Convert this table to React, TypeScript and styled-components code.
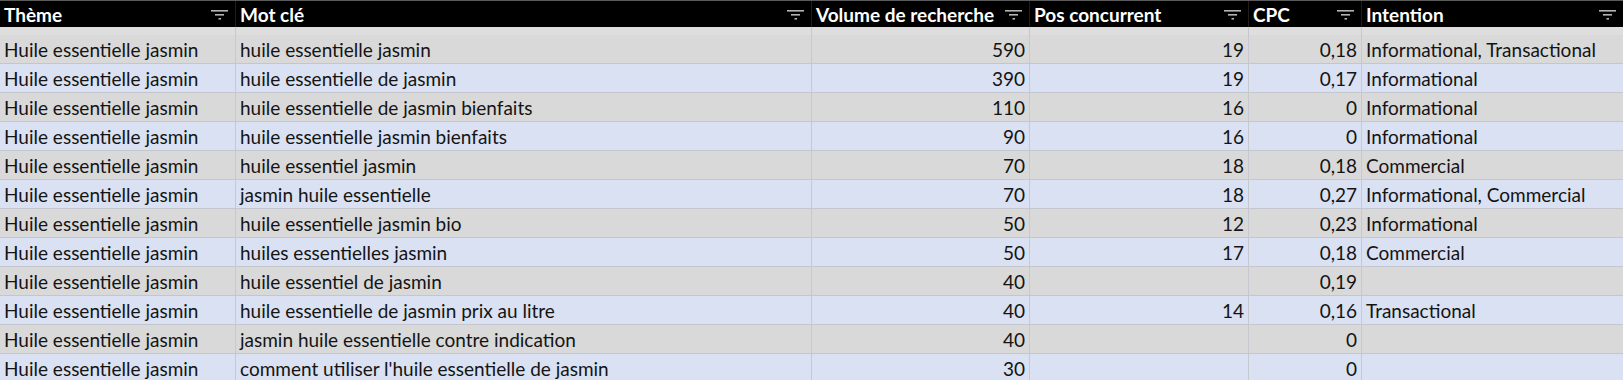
import React from 'react';
import styled, { createGlobalStyle } from 'styled-components';

const GlobalStyle = createGlobalStyle`
  html, body {
    margin: 0;
    padding: 0;
    background: #ffffff;
  }
  * {
    box-sizing: border-box;
  }
`;

const COLUMNS = '236px 576px 218px 219px 113px 261px';

const Sheet = styled.div`
  width: 1623px;
  height: 380px;
  overflow: hidden;
  font-family: Lato, "Liberation Sans", sans-serif;
  font-size: 19px;
  color: #141414;
`;

const HeaderRow = styled.div`
  display: grid;
  grid-template-columns: ${COLUMNS};
  height: 27px;
  background: #000000;
  border-top: 1px solid #5a5a5a;
`;

const HeaderCell = styled.div`
  display: flex;
  align-items: center;
  justify-content: space-between;
  padding: 1px 6px 0 4px;
  color: #ffffff;
  font-weight: 700;
  border-right: 1px solid #1e1e1e;
  white-space: nowrap;

  &:last-child {
    border-right: none;
  }
`;

const Spacer = styled.div`
  display: grid;
  grid-template-columns: ${COLUMNS};
  height: 8px;
  background: #dedede;

  & > div {
    border-right: 1px solid #c4c6ca;
  }
  & > div:last-child {
    border-right: none;
  }
`;

const Row = styled.div<{ $alt: boolean }>`
  display: grid;
  grid-template-columns: ${COLUMNS};
  height: 29px;
  background: ${(p) => (p.$alt ? '#d9e1f2' : '#d9d9d9')};
  border-bottom: 1px solid #c3c6cc;
`;

const Cell = styled.div<{ $num?: boolean }>`
  display: flex;
  align-items: center;
  justify-content: ${(p) => (p.$num ? 'flex-end' : 'flex-start')};
  padding: 1px 4px 0 4px;
  border-right: 1px solid #c6c9cf;
  white-space: nowrap;
  overflow: hidden;

  &:last-child {
    border-right: none;
  }
`;

const FilterIcon = () => (
  <svg width="18" height="14" viewBox="0 0 18 14" fill="none">
    <rect x="0" y="2" width="17" height="1.6" fill="#b4b4b4" />
    <rect x="4" y="6" width="9" height="1.6" fill="#b4b4b4" />
    <rect x="7.5" y="10" width="2.5" height="1.6" fill="#b4b4b4" />
  </svg>
);

const headers = ['Thème', 'Mot clé', 'Volume de recherche', 'Pos concurrent', 'CPC', 'Intention'];

const rows: [string, string, string, string, string, string][] = [
  ['Huile essentielle jasmin', 'huile essentielle jasmin', '590', '19', '0,18', 'Informational, Transactional'],
  ['Huile essentielle jasmin', 'huile essentielle de jasmin', '390', '19', '0,17', 'Informational'],
  ['Huile essentielle jasmin', 'huile essentielle de jasmin bienfaits', '110', '16', '0', 'Informational'],
  ['Huile essentielle jasmin', 'huile essentielle jasmin bienfaits', '90', '16', '0', 'Informational'],
  ['Huile essentielle jasmin', 'huile essentiel jasmin', '70', '18', '0,18', 'Commercial'],
  ['Huile essentielle jasmin', 'jasmin huile essentielle', '70', '18', '0,27', 'Informational, Commercial'],
  ['Huile essentielle jasmin', 'huile essentielle jasmin bio', '50', '12', '0,23', 'Informational'],
  ['Huile essentielle jasmin', 'huiles essentielles jasmin', '50', '17', '0,18', 'Commercial'],
  ['Huile essentielle jasmin', 'huile essentiel de jasmin', '40', '', '0,19', ''],
  ['Huile essentielle jasmin', 'huile essentielle de jasmin prix au litre', '40', '14', '0,16', 'Transactional'],
  ['Huile essentielle jasmin', 'jasmin huile essentielle contre indication', '40', '', '0', ''],
  ['Huile essentielle jasmin', "comment utiliser l'huile essentielle de jasmin", '30', '', '0', ''],
];

const App: React.FC = () => {
  return (
    <>
      <GlobalStyle />
      <Sheet>
        <HeaderRow>
          {headers.map((h) => (
            <HeaderCell key={h}>
              <span>{h}</span>
              <FilterIcon />
            </HeaderCell>
          ))}
        </HeaderRow>
        <Spacer>
          {headers.map((h) => (
            <div key={h} />
          ))}
        </Spacer>
        {rows.map((r, i) => (
          <Row key={i} $alt={i % 2 === 1}>
            <Cell>{r[0]}</Cell>
            <Cell>{r[1]}</Cell>
            <Cell $num>{r[2]}</Cell>
            <Cell $num>{r[3]}</Cell>
            <Cell $num>{r[4]}</Cell>
            <Cell>{r[5]}</Cell>
          </Row>
        ))}
      </Sheet>
    </>
  );
};

export default App;
